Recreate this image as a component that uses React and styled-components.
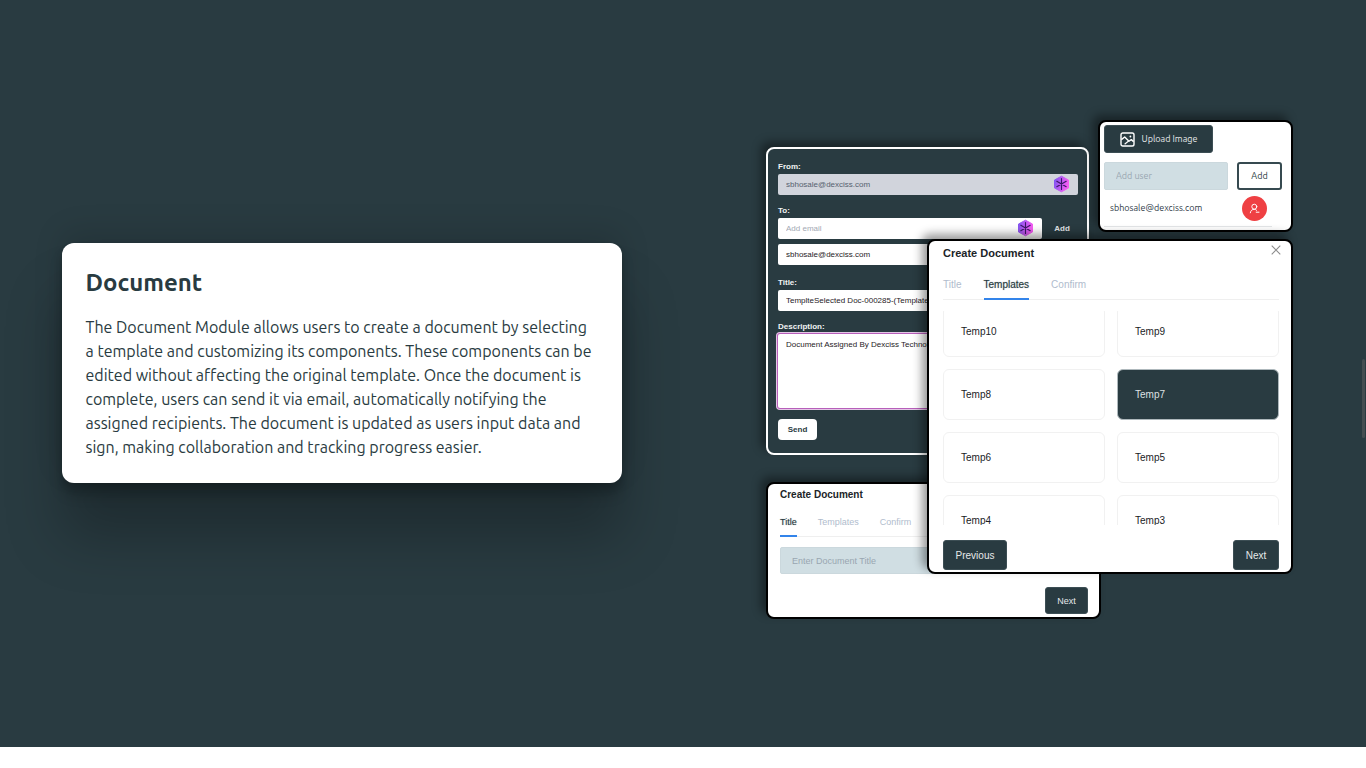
import React from "react";
import styled, { createGlobalStyle, css } from "styled-components";

const ink = "#293b41";
const ui = '"Liberation Sans", Arial, sans-serif';
const humanist = 'Ubuntu, "Noto Sans", sans-serif';

const GlobalStyle = createGlobalStyle`
  *, *::before, *::after { box-sizing: border-box; }
  body { margin: 0; background: #fff; font-family: ${humanist}; color: ${ink}; }
  h2, h3, p { margin: 0; }
  button, input, textarea { font: inherit; margin: 0; }
`;

const Section = styled.section`
  position: relative;
  display: grid;
  grid-template-columns: 1fr 1fr;
  align-items: center;
  justify-items: center;
  min-height: 747px;
  padding-bottom: 8px;
  overflow: hidden;
  background: ${ink};
`;

const IntroCard = styled.article`
  width: 82%;
  max-width: 560px;
  margin-bottom: 14px;
  padding: 24px;
  border-radius: 12px;
  background: #fff;
  box-shadow: 0 54px 55px rgba(0, 0, 0, 0.25), 0 -12px 30px rgba(0, 0, 0, 0.12),
    0 4px 6px rgba(0, 0, 0, 0.12), 0 12px 13px rgba(0, 0, 0, 0.17);
`;

const IntroTitle = styled.h2`
  margin-bottom: 16px;
  font-size: 24px;
  line-height: 32px;
  font-weight: 700;
`;

const IntroText = styled.p`
  font-size: 16px;
  line-height: 24px;
  white-space: nowrap;
`;

const ScrollThumb = styled.span`
  position: absolute;
  top: 359px;
  right: 1px;
  width: 3px;
  height: 79px;
  border-radius: 2px;
  background: #444e51;
`;

const Collage = styled.div`
  position: relative;
  width: 527px;
  height: 499px;
  margin-left: 10px;
  font-family: ${ui};
`;

const Panel = styled.section`
  position: absolute;
  border: 2px solid #000;
  border-radius: 8px;
  background: #fff;
  box-shadow: -5px -5px 10px rgba(0, 0, 0, 0.4);
`;

const EmailPanel = styled(Panel)`
  left: 0;
  top: 27px;
  width: 323px;
  padding: 9px 9px 13px 10px;
  border-color: #fff;
  background: ${ink};
  font-size: 8px;
`;

const TitlePanel = styled(Panel)`
  left: 0;
  top: 362px;
  width: 335px;
  padding: 0 11px 3px 12px;
  font-size: 9px;
`;

const UploadPanel = styled(Panel)`
  left: 332px;
  top: 0;
  width: 195px;
  padding: 3px 9px 3px 4px;
  font-family: ${humanist};
  font-size: 9px;
`;

const TemplatesPanel = styled(Panel)`
  left: 161px;
  top: 119px;
  width: 366px;
  padding: 0 12px 2px 14px;
  font-size: 10px;
`;

const Field = styled.div`
  display: flex;
  flex-direction: column;
  margin-bottom: ${(p) => p.$gap || 7}px;
`;

const Label = styled.label`
  padding-top: 2px;
  color: #f1f3f4;
  font-weight: 700;
  line-height: 14px;
`;

const InputRow = styled.div`
  display: flex;
  align-items: center;
`;

const IconField = styled.div`
  position: relative;
  flex: ${(p) => (p.$width ? "none" : 1)};
  width: ${(p) => (p.$width ? p.$width + "px" : "auto")};
  height: 21px;
  svg { position: absolute; right: 8px; top: 1px; }
`;

const boxStyle = css`
  display: block;
  width: 100%;
  border: 0;
  border-radius: 2px;
  outline: 0;
  background: #fff;
  color: #1f2226;
  &::placeholder { color: #a3a9b4; opacity: 1; }
`;

const MailInput = styled.input`
  ${boxStyle}
  height: 21px;
  padding: 0 8px;
  ${(p) => p.$muted && "background: #d1d4dc; color: #56616f;"}
`;

const MailText = styled.textarea`
  ${boxStyle}
  height: 74px;
  padding: 5px 8px;
  line-height: 12px;
  resize: none;
  overflow: hidden;
  box-shadow: 0 0 0 1px #b75fba, 0 0 0 2px #e3c6e6;
`;

const PlainButton = styled.button`
  padding: 0;
  border: 0;
  background: none;
  color: #e4e7e9;
  font-weight: 700;
  cursor: pointer;
`;

const AddLink = styled(PlainButton)`
  flex: 1;
  padding-left: 4px;
`;

const SendButton = styled(PlainButton)`
  display: block;
  width: 39px;
  height: 21px;
  border-radius: 4px;
  background: #fff;
  color: ${ink};
`;

const PanelTitle = styled.h3`
  color: #202427;
  font-size: ${(p) => p.$size}px;
  line-height: ${(p) => p.$line}px;
  font-weight: 700;
`;

const CloseButton = styled.button`
  position: absolute;
  top: 3px;
  right: 9px;
  display: flex;
  padding: 0;
  border: 0;
  background: none;
  cursor: pointer;
`;

const Tabs = styled.div`
  display: flex;
  gap: ${(p) => p.$gap}px;
  margin: ${(p) => p.$top}px 0 10px;
  box-shadow: inset 0 -1px #efefef;
`;

const Tab = styled.button`
  padding: 0 0 5px;
  border: 0;
  border-bottom: 2px solid ${(p) => (p.$active ? "#3384ea" : "transparent")};
  background: none;
  color: ${(p) => (p.$active ? ink : "#b0bccd")};
  text-shadow: ${(p) => (p.$active ? "0 0 1px rgba(41, 59, 65, 0.5)" : "none")};
  line-height: 16px;
  cursor: pointer;
`;

const TemplateViewport = styled.div`
  height: 214px;
  margin-top: 11px;
  overflow: hidden;
`;

const TemplateGrid = styled.div`
  display: grid;
  grid-template-columns: 1fr 1fr;
  grid-auto-rows: 51px;
  gap: 12px;
  margin-top: -5px;
`;

const TemplateCard = styled.button`
  padding: 0 17px;
  border: 1px solid ${(p) => (p.$selected ? "#aeb8bc" : "#f1f1f1")};
  border-radius: 6px;
  background: ${(p) => (p.$selected ? ink : "#fff")};
  color: ${(p) => (p.$selected ? "#dde1e3" : "#1b1d1f")};
  text-align: left;
  cursor: pointer;
`;

const Footer = styled.div`
  display: flex;
  justify-content: ${(p) => (p.$end ? "flex-end" : "space-between")};
  margin-top: ${(p) => p.$top}px;
`;

const DarkButton = styled.button`
  display: flex;
  align-items: center;
  justify-content: center;
  gap: 7px;
  width: ${(p) => p.$width}px;
  height: ${(p) => p.$height}px;
  padding: 0;
  border: 1px solid #3c4e54;
  border-radius: 3px;
  background: ${ink};
  color: #e6e9ea;
  cursor: pointer;
`;

const SoftInput = styled.input`
  width: 100%;
  min-width: 0;
  height: ${(p) => p.$height}px;
  padding: 0 11px;
  border: 1px solid #cbd8dd;
  border-radius: 2px;
  background: #d0dee3;
  color: ${ink};
  outline: 0;
  &::placeholder { color: #99a6b1; opacity: 1; }
`;

const UserRow = styled.div`
  display: grid;
  grid-template-columns: 124px 45px;
  gap: 9px;
  margin-top: 9px;
`;

const OutlineButton = styled.button`
  height: 28px;
  padding: 0;
  border: 2px solid #364a50;
  border-radius: 3px;
  background: #fff;
  color: ${ink};
  cursor: pointer;
`;

const Member = styled.div`
  display: flex;
  align-items: center;
  justify-content: space-between;
  width: 168px;
  height: 37px;
  padding: 0 5px 0 6px;
  border-bottom: 1px solid #e4e6e8;
  color: #303b49;
`;

const RemoveButton = styled.button`
  display: flex;
  align-items: center;
  justify-content: center;
  width: 25px;
  height: 25px;
  padding: 0;
  border: 0;
  border-radius: 50%;
  background: #ef4043;
  cursor: pointer;
`;

const HexIcon = ({ id }) => (
  <svg width="17" height="18" viewBox="0 0 17 18" aria-hidden="true">
    <defs>
      <linearGradient id={id} x1="0" y1="0" x2="1" y2="0.3">
        <stop offset="0" stopColor="#7a55f2" />
        <stop offset="1" stopColor="#f45cf2" />
      </linearGradient>
    </defs>
    <path
      d="M8.5 1.2 15.5 5V13L8.5 16.8 1.5 13V5Z"
      fill={`url(#${id})`}
      stroke={`url(#${id})`}
      strokeWidth="1"
      strokeLinejoin="round"
    />
    <path
      d="M8.5 3.6V14.4M3.8 6.3 13.2 11.7M3.8 11.7 13.2 6.3"
      stroke="#3b1767"
      strokeWidth="1.1"
      strokeLinecap="round"
    />
  </svg>
);

const ImageIcon = () => (
  <svg width="15" height="15" viewBox="0 0 15 15" fill="none" stroke="#fff" aria-hidden="true">
    <rect x="1" y="1" width="13" height="13" rx="1.8" strokeWidth="1.4" />
    <path d="M1.4 7.6 4.7 5 9 9.2 11.3 7.6 13.6 9.6" strokeWidth="1.4" strokeLinejoin="round" />
    <path d="M4.6 12.2 8.6 9" strokeWidth="1.2" />
    <circle cx="10.4" cy="4.5" r=".9" fill="#fff" stroke="none" />
  </svg>
);

const UserMinusIcon = () => (
  <svg width="11" height="11" viewBox="0 0 11 11" fill="none" stroke="#fff" strokeWidth="1" strokeLinecap="round" aria-hidden="true">
    <circle cx="5.3" cy="3.7" r="2.5" />
    <path d="M1.3 9.8C1.6 7.6 3.1 6.3 5.3 6.3 6.2 6.3 7 6.7 7.6 7.3M7.2 9.2H10" />
  </svg>
);

const CloseIcon = () => (
  <svg width="12" height="12" viewBox="0 0 12 12" fill="none" stroke="#8c8c8c" strokeWidth="1.1" aria-hidden="true">
    <path d="M1.7 1.7 10.3 10.3M10.3 1.7 1.7 10.3" />
  </svg>
);

const tabNames = ["Title", "Templates", "Confirm"];
const templates = ["Temp10", "Temp9", "Temp8", "Temp7", "Temp6", "Temp5", "Temp4", "Temp3"];

const TabBar = ({ active, gap, top }) => (
  <Tabs $gap={gap} $top={top} role="tablist">
    {tabNames.map((name) => (
      <Tab key={name} role="tab" aria-selected={name === active} $active={name === active}>
        {name}
      </Tab>
    ))}
  </Tabs>
);

export default function App() {
  return (
    <>
      <GlobalStyle />
      <Section>
        <IntroCard>
          <IntroTitle>Document</IntroTitle>
          <IntroText>
            The Document Module allows users to create a document by selecting<br />
            a template and customizing its components. These components can be<br />
            edited without affecting the original template. Once the document is<br />
            complete, users can send it via email, automatically notifying the<br />
            assigned recipients. The document is updated as users input data and<br />
            sign, making collaboration and tracking progress easier.
          </IntroText>
        </IntroCard>

        <Collage>
          <EmailPanel>
            <Field>
              <Label htmlFor="from">From:</Label>
              <IconField>
                <MailInput id="from" $muted defaultValue="sbhosale@dexciss.com" readOnly />
                <HexIcon id="hex-from" />
              </IconField>
            </Field>
            <Field $gap={5}>
              <Label htmlFor="to">To:</Label>
              <InputRow>
                <IconField $width={264}>
                  <MailInput id="to" placeholder="Add email" />
                  <HexIcon id="hex-to" />
                </IconField>
                <AddLink>Add</AddLink>
              </InputRow>
            </Field>
            <Field $gap={9}>
              <MailInput aria-label="Recipient" defaultValue="sbhosale@dexciss.com" />
            </Field>
            <Field>
              <Label htmlFor="mail-title">Title:</Label>
              <MailInput id="mail-title" defaultValue="TemplteSelected Doc-000285-(Template2)" />
            </Field>
            <Field $gap={11}>
              <Label htmlFor="description">Description:</Label>
              <MailText id="description" defaultValue="Document Assigned By Dexciss Technology" />
            </Field>
            <SendButton>Send</SendButton>
          </EmailPanel>

          <TitlePanel>
            <PanelTitle $size={10} $line={22}>Create Document</PanelTitle>
            <TabBar active="Title" gap={21} top={8} />
            <SoftInput $height={27} aria-label="Document title" placeholder="Enter Document Title" />
            <Footer $end $top={13}>
              <DarkButton $width={43} $height={27}>Next</DarkButton>
            </Footer>
          </TitlePanel>

          <UploadPanel>
            <DarkButton $width={109} $height={28}>
              <ImageIcon />
              Upload Image
            </DarkButton>
            <UserRow>
              <SoftInput $height={28} aria-label="Add user" placeholder="Add user" />
              <OutlineButton>Add</OutlineButton>
            </UserRow>
            <Member>
              sbhosale@dexciss.com
              <RemoveButton aria-label="Remove user">
                <UserMinusIcon />
              </RemoveButton>
            </Member>
          </UploadPanel>

          <TemplatesPanel>
            <PanelTitle $size={11} $line={24}>Create Document</PanelTitle>
            <CloseButton aria-label="Close">
              <CloseIcon />
            </CloseButton>
            <TabBar active="Templates" gap={22} top={12} />
            <TemplateViewport>
              <TemplateGrid>
                {templates.map((name) => (
                  <TemplateCard key={name} $selected={name === "Temp7"}>{name}</TemplateCard>
                ))}
              </TemplateGrid>
            </TemplateViewport>
            <Footer $top={15}>
              <DarkButton $width={64} $height={30}>Previous</DarkButton>
              <DarkButton $width={46} $height={30}>Next</DarkButton>
            </Footer>
          </TemplatesPanel>
        </Collage>
        <ScrollThumb />
      </Section>
    </>
  );
}
